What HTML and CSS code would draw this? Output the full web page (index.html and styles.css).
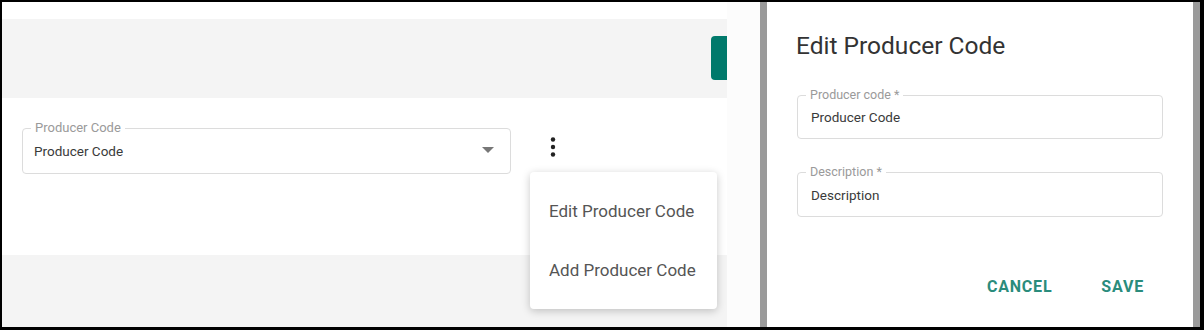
FILE: index.html
```html
<!DOCTYPE html>
<html lang="en">
<head>
  <meta charset="UTF-8">
  <title>Producer Code</title>
  <link rel="stylesheet" href="styles.css">
</head>
<body>

  <div class="frame">

    <div class="page">
      <div class="page-top"></div>
      <div class="toolbar">
        <button class="toolbar-btn"></button>
      </div>

      <div class="content">
        <div class="field select-field">
          <span class="field-label">Producer Code</span>
          <span class="field-value">Producer Code</span>
          <span class="select-arrow"></span>
        </div>

        <button class="kebab" aria-label="More">
          <svg width="10" height="24" viewBox="0 0 10 24">
            <circle cx="5" cy="4.5" r="2.2" fill="#222" />
            <circle cx="5" cy="12" r="2.2" fill="#222" />
            <circle cx="5" cy="19.5" r="2.2" fill="#222" />
          </svg>
        </button>

        <div class="menu">
          <div class="menu-item">Edit Producer Code</div>
          <div class="menu-item">Add Producer Code</div>
        </div>
      </div>

      <div class="page-bottom"></div>
    </div>

    <div class="gutter"></div>
    <div class="scrim-bar"></div>

    <div class="dialog">
      <h2 class="dialog-title">Edit Producer Code</h2>

      <div class="field dialog-field">
        <span class="field-label">Producer code *</span>
        <span class="field-value">Producer Code</span>
      </div>

      <div class="field dialog-field">
        <span class="field-label">Description *</span>
        <span class="field-value">Description</span>
      </div>

      <div class="dialog-actions">
        <button class="text-btn">Cancel</button>
        <button class="text-btn">Save</button>
      </div>
    </div>

    <div class="scrim-bar"></div>

  </div>

</body>
</html>
```

FILE: styles.css
```css
* {
  margin: 0;
  padding: 0;
  box-sizing: border-box;
}

body {
  font-family: Roboto, 'Liberation Sans', sans-serif;
  background: #fff;
  color: #333;
}

.frame {
  display: flex;
  width: 1204px;
  height: 330px;
  border: 2px solid #000;
  border-right-width: 4px;
  border-bottom-width: 3px;
  overflow: hidden;
}

/* left: the page behind the dialog */

.page {
  display: flex;
  flex-direction: column;
  width: 725px;
  flex-shrink: 0;
}

.page-top {
  height: 17px;
  background: #fff;
}

.toolbar {
  display: flex;
  justify-content: flex-end;
  align-items: flex-start;
  height: 79px;
  padding-top: 17px;
  background: #f4f4f4;
}

.toolbar-btn {
  width: 16px;
  height: 44px;
  border: none;
  border-radius: 4px 0 0 4px;
  background: #00796b;
}

.content {
  position: relative;
  display: flex;
  align-items: flex-start;
  height: 157px;
  padding: 30px 0 0 20px;
  background: #fff;
}

.field {
  position: relative;
  display: flex;
  align-items: center;
  border: 1px solid #dcdcdc;
  border-radius: 4px;
  background: #fff;
}

.field-label {
  position: absolute;
  top: -9px;
  left: 8px;
  padding: 0 4px;
  background: #fff;
  font-size: 13px;
  line-height: 16px;
  color: #9a9a9a;
}

.field-value {
  font-size: 13.5px;
  color: #3a3a3a;
}

.select-field {
  width: 489px;
  height: 46px;
  padding-left: 11px;
}

.select-arrow {
  position: absolute;
  right: 16px;
  top: 18px;
  border-left: 6px solid transparent;
  border-right: 6px solid transparent;
  border-top: 6px solid #777;
}

.kebab {
  margin: 7px 0 0 37px;
  border: none;
  background: none;
  line-height: 0;
}

.menu {
  position: absolute;
  left: 528px;
  top: 74px;
  width: 187px;
  padding: 10px 0 9px;
  background: #fff;
  border-radius: 4px;
  box-shadow: 0 2px 8px rgba(0, 0, 0, 0.22);
}

.menu-item {
  height: 59px;
  line-height: 59px;
  padding-left: 19px;
  font-size: 17px;
  color: #555;
}

.page-bottom {
  flex: 1;
  background: #f4f4f4;
}

.gutter {
  width: 33px;
  flex-shrink: 0;
  background: #fcfcfc;
}

.scrim-bar {
  width: 7px;
  flex-shrink: 0;
  background: #9a9a9a;
}

/* right: the dialog */

.dialog {
  width: 426px;
  flex-shrink: 0;
  padding: 28px 30px 0 30px;
  background: #fff;
}

.dialog-title {
  font-size: 24.5px;
  font-weight: 400;
  line-height: 32px;
  color: #333;
  margin-left: -1px;
}

.dialog-field {
  height: 44px;
  margin-top: 33px;
  padding-left: 13px;
}

.dialog-field .field-label {
  font-size: 12.5px;
}

.dialog-field + .dialog-field {
  height: 45px;
}

.dialog-actions {
  display: flex;
  justify-content: flex-end;
  gap: 17px;
  margin-top: 51px;
  padding-right: 3px;
}

.text-btn {
  height: 36px;
  padding: 0 16px;
  border: none;
  background: none;
  font-family: Roboto, 'Liberation Sans', sans-serif;
  font-size: 16px;
  font-weight: 700;
  letter-spacing: 0.8px;
  text-transform: uppercase;
  color: #2a8c7c;
}
```
